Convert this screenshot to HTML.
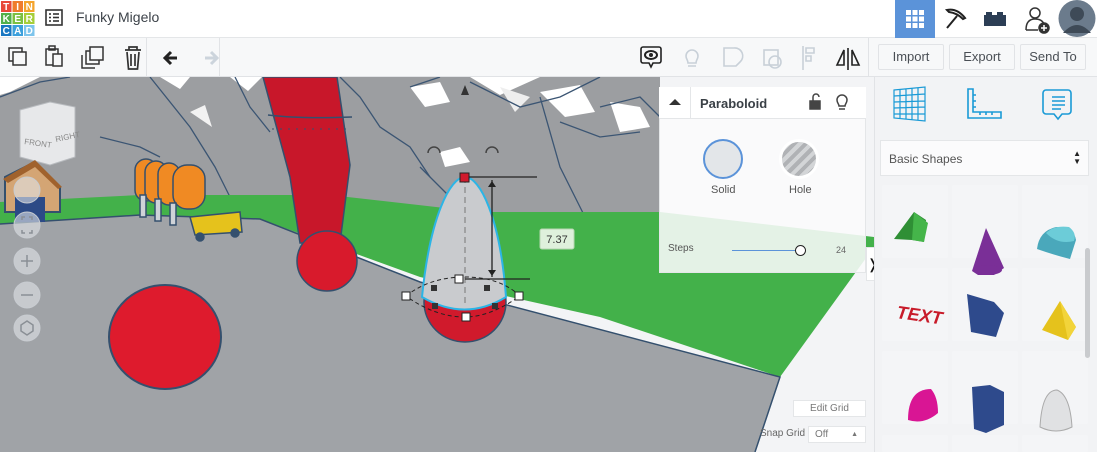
<!DOCTYPE html>
<html style="width:1097px;height:452px;overflow:hidden"><head><meta charset="utf-8"><style>
*{margin:0;padding:0;box-sizing:border-box}
body{width:1097px;height:452px;overflow:hidden;font-family:"Liberation Sans",sans-serif;background:#fff;position:relative}
.abs{position:absolute}
.btn{position:absolute;top:44px;height:26px;border:1px solid #e1e3e6;background:#f7f8f9;border-radius:2px;font-size:13px;color:#4a4f55;text-align:center;line-height:24px}
.tile{position:absolute;width:66px;height:73px;background:#f4f5f7;border-radius:2px}
</style></head><body>
<div class="abs" style="left:0;top:0;width:1097px;height:38px;background:#fff;border-bottom:1px solid #e4e6e8"></div>
<svg class="abs" style="left:0px;top:0px" width="36" height="37">
<g font-family="Liberation Sans" font-weight="bold" font-size="10" fill="#fff" text-anchor="middle">
<rect x="1" y="1" width="10.5" height="11" fill="#e8483a"/><text x="6.2" y="10">T</text>
<rect x="12.5" y="1" width="10.5" height="11" fill="#ef7c2c"/><text x="17.7" y="10">I</text>
<rect x="24" y="1" width="10.5" height="11" fill="#f4a42c"/><text x="29.2" y="10">N</text>
<rect x="1" y="13" width="10.5" height="11" fill="#52b04b"/><text x="6.2" y="22">K</text>
<rect x="12.5" y="13" width="10.5" height="11" fill="#7cc042"/><text x="17.7" y="22">E</text>
<rect x="24" y="13" width="10.5" height="11" fill="#a6ce39"/><text x="29.2" y="22">R</text>
<rect x="1" y="25" width="10.5" height="11" fill="#1a78c2"/><text x="6.2" y="34">C</text>
<rect x="12.5" y="25" width="10.5" height="11" fill="#3ca0dc"/><text x="17.7" y="34">A</text>
<rect x="24" y="25" width="10.5" height="11" fill="#7dc4ec"/><text x="29.2" y="34">D</text></g></svg>
<svg class="abs" style="left:45px;top:9px" width="18" height="17"><rect x="1" y="1" width="16" height="15" fill="none" stroke="#333" stroke-width="1.6"/><g stroke="#333" stroke-width="1.6"><line x1="4" y1="5" x2="6" y2="5"/><line x1="8" y1="5" x2="14" y2="5"/><line x1="4" y1="8.5" x2="6" y2="8.5"/><line x1="8" y1="8.5" x2="14" y2="8.5"/><line x1="4" y1="12" x2="6" y2="12"/><line x1="8" y1="12" x2="14" y2="12"/></g></svg>
<div class="abs" style="left:76px;top:9px;font-size:14px;color:#3c4249">Funky Migelo</div>
<div class="abs" style="left:895px;top:0;width:40px;height:38px;background:#5b93d9"></div>
<svg class="abs" style="left:905px;top:9px" width="20" height="20" fill="#fff"><rect x="1" y="1" width="5" height="5"/><rect x="7.5" y="1" width="5" height="5"/><rect x="14" y="1" width="5" height="5"/><rect x="1" y="7.5" width="5" height="5"/><rect x="7.5" y="7.5" width="5" height="5"/><rect x="14" y="7.5" width="5" height="5"/><rect x="1" y="14" width="5" height="5"/><rect x="7.5" y="14" width="5" height="5"/><rect x="14" y="14" width="5" height="5"/></svg>
<svg class="abs" style="left:943px;top:6px" width="26" height="26" fill="none" stroke="#222" stroke-width="2"><path d="M4 4 Q14 2 22 12 L20 13 Q14 7 6 6 Z"/><line x1="14" y1="10" x2="4" y2="22"/></svg>
<svg class="abs" style="left:983px;top:11px" width="24" height="16" fill="#2c3e55"><rect x="1" y="4" width="22" height="11"/><rect x="3" y="1" width="6" height="4"/><rect x="14" y="1" width="6" height="4"/></svg>
<svg class="abs" style="left:1024px;top:6px" width="26" height="28" fill="none" stroke="#333" stroke-width="1.5"><circle cx="11" cy="7" r="5"/><path d="M2 24 Q2 13 11 13 Q18 13 20 18"/><line x1="2" y1="24" x2="14" y2="24"/><circle cx="20" cy="22" r="5" fill="#333"/><path d="M20 19v6M17 22h6" stroke="#fff"/></svg>
<svg class="abs" style="left:1057px;top:0px" width="40" height="37"><circle cx="20" cy="18.5" r="18.5" fill="#6b7b8c"/><circle cx="20" cy="14" r="7" fill="#3e4a57"/><path d="M6 33 Q20 17 34 33" fill="#3e4a57"/></svg>

<div class="abs" style="left:0;top:38px;width:1097px;height:39px;background:#f7f8f9;border-bottom:1px solid #e1e3e6"></div>
<div class="abs" style="left:146px;top:38px;width:1px;height:39px;background:#e1e3e6"></div>
<div class="abs" style="left:219px;top:38px;width:1px;height:39px;background:#e1e3e6"></div>
<div class="abs" style="left:868px;top:38px;width:1px;height:39px;background:#e1e3e6"></div>
<svg class="abs" style="left:0px;top:38px" width="240" height="39" fill="none" stroke="#333" stroke-width="1.5">
<rect x="9" y="10" width="13" height="13"/><rect x="13" y="14" width="13" height="13" fill="#f7f8f9"/>
<rect x="46" y="11" width="12" height="16"/><rect x="49" y="8" width="6" height="4"/><rect x="53" y="16" width="9" height="12" fill="#f7f8f9"/>
<rect x="86" y="13" width="13" height="13"/><rect x="90" y="9" width="13" height="13" fill="#f7f8f9"/><path d="M82 17v13h13"/>
<path d="M125 12h16M129 12v-3h8v3M127 14l1.5 17h9l1.5-17M131 16v12M135 16v12" stroke-width="1.7"/>
<path d="M165 20h12 M171 14l-6 6 6 6" stroke="#222" stroke-width="3"/>
<path d="M217 20h-12 M211 14l6 6-6 6" stroke="#ccd4dc" stroke-width="3"/>
</svg>
<svg class="abs" style="left:630px;top:38px" width="240" height="39" fill="none" stroke-width="1.6">
<path d="M13 9h16a2 2 0 0 1 2 2v12a2 2 0 0 1-2 2h-6l-2 4-2-4h-6a2 2 0 0 1-2-2v-12a2 2 0 0 1 2-2z" stroke="#222"/><ellipse cx="21" cy="17" rx="6" ry="4" stroke="#222" stroke-width="2"/><circle cx="21" cy="17" r="2" fill="#222"/>
<g stroke="#c8d0d8"><path d="M56 18a6 6 0 1 1 12 0c0 3-2 4-2 7h-8c0-3-2-4-2-7zM58 28h8"/><path d="M94 10h10a8 8 0 0 1 6 14l-4 4h-12z"/><rect x="134" y="12" width="14" height="15"/><circle cx="145" cy="24" r="6"/><path d="M173 8v24M176 10h8v5h-8zM176 18h5v5h-5z"/></g>
<path d="M218 10v22M214 12l-7 15h7zM222 12l7 15h-7z" stroke="#222"/>
</svg>
<div class="btn" style="left:878px;width:66px">Import</div>
<div class="btn" style="left:949px;width:66px">Export</div>
<div class="btn" style="left:1020px;width:66px">Send To</div>

<svg class="abs" style="left:0px;top:77px" width="874" height="375">
<rect width="874" height="375" fill="#f3f4f6"/>
<rect width="660" height="170" fill="#9c9ea1"/>
<polygon points="0,0 40,0 10,15 0,18" fill="#fff"/>
<polygon points="160,0 190,0 180,12" fill="#fff"/>
<polygon points="230,0 262,0 248,14" fill="#fff"/>
<polygon points="410,10 440,5 450,25 425,30" fill="#fff"/>
<polygon points="470,0 540,0 500,18" fill="#fff"/>
<polygon points="190,35 205,28 212,50" fill="#f2f2f2"/>
<polygon points="540,15 580,8 595,35 565,40" fill="#fff"/>
<polygon points="610,25 640,30 650,50 620,55" fill="#fff"/>
<polygon points="440,75 460,70 470,85 445,90" fill="#fff"/>
<polygon points="500,10 530,20 515,35" fill="#eee"/>
<g fill="none" stroke="#3b5573" stroke-width="1.3">
<path d="M0 20 L40 5 L70 0"/><path d="M150 0 L190 50 L215 90 L230 120"/><path d="M235 0 L250 30 L270 55"/><path d="M340 0 L360 20 L380 50 L410 70 L430 100"/><path d="M410 10 L440 0"/><path d="M470 5 L520 30 L560 20 L600 0"/><path d="M540 20 L560 90 L580 130 L590 150"/><path d="M600 30 L640 20 L660 40"/><path d="M560 45 L600 60 L640 55"/><path d="M420 90 L450 120 L470 140"/><path d="M100 60 L140 70 L160 80"/>
</g>
<polygon points="0,125 140,118 330,118 480,135 660,135 874,160 874,170 780,300 600,240 420,200 260,142 140,138 0,147" fill="#43b14a"/>
<polygon points="0,147 140,138 260,142 420,205 780,300 755,375 0,375" fill="#a0a3a7"/>
<path d="M0 147 L140 138 L260 142 L420 205 L780 300 L755 375" fill="none" stroke="#34506e" stroke-width="1.5"/>
<polygon points="20,33 50,25 75,30 75,80 50,88 20,80" fill="#e7e8ea" stroke="#b8bbbf"/>
<text x="24" y="67" font-size="8" fill="#888" transform="rotate(8 24 67)">FRONT</text><text x="56" y="65" font-size="8" fill="#888" transform="rotate(-12 56 65)">RIGHT</text>
<polygon points="5,100 35,85 60,110 60,135 5,135" fill="#d4a574" stroke="#34506e" stroke-width="2"/>
<polygon points="3,102 35,83 62,110 58,112 35,90 8,106" fill="#a0622d"/>
<rect x="15" y="120" width="30" height="25" fill="#2c4a86"/>
<g stroke="#34506e" stroke-width="1.5"><rect x="135" y="82" width="22" height="42" rx="11" fill="#f08a23"/><rect x="145" y="84" width="22" height="42" rx="11" fill="#f08a23"/><rect x="158" y="86" width="22" height="42" rx="11" fill="#f08a23"/><rect x="173" y="88" width="32" height="44" rx="14" fill="#f08a23"/>
<rect x="140" y="118" width="6" height="22" fill="#cfd3d8"/><rect x="155" y="122" width="6" height="22" fill="#cfd3d8"/><rect x="170" y="126" width="6" height="22" fill="#cfd3d8"/>
<polygon points="190,140 240,135 242,155 195,158" fill="#e5c21c"/><circle cx="200" cy="160" r="4" fill="#34506e"/><circle cx="235" cy="156" r="4" fill="#34506e"/></g>
<g fill="rgba(225,228,232,0.6)" stroke="#c8ccd1"><circle cx="27" cy="113" r="13"/><circle cx="27" cy="148" r="13"/><circle cx="27" cy="184" r="13"/><circle cx="27" cy="218" r="13"/><circle cx="27" cy="251" r="13"/></g>
<g stroke="#8a8f95" stroke-width="1.5" fill="none"><path d="M21 184h12M27 178v12M21 218h12"/><path d="M22 143v-3h3M29 140h3v3M32 153v3h-3M25 156h-3v-3"/><path d="M27 244l6 4v6l-6 4-6-4v-6z"/></g>
<polygon points="263,0 337,0 350,88 340,166 300,166 290,100" fill="#c8172a" stroke="#34506e" stroke-width="1.5"/>
<path d="M268 38 Q300 42 352 40" fill="none" stroke="#34506e" stroke-width="1.5"/>
<path d="M272 52 L350 52" stroke="#34506e" stroke-dasharray="2 6"/>
<circle cx="327" cy="184" r="30" fill="#d81a2c" stroke="#34506e" stroke-width="1.5"/>
<ellipse cx="165" cy="260" rx="56" ry="52" fill="#de1b2d" stroke="#34506e" stroke-width="2"/>
<ellipse cx="465" cy="225" rx="41" ry="40" fill="#d01a2c" stroke="#34506e" stroke-width="1.5"/>
<path d="M422 220 C430 140 450 100 465 100 C480 100 500 140 506 220 Q465 245 422 220Z" fill="#c9cbce" stroke="#2bb5e6" stroke-width="2"/>
<path d="M465 100 V230" stroke="#777" stroke-dasharray="6 4"/>
<path d="M465 100 H537 M492 103 V200 M465 202 H530" stroke="#222" stroke-width="1.3"/>
<path d="M488 110 l4-6 4 6z M488 193 l4 6 4-6z" fill="#222"/>
<path d="M406 219 Q430 200 465 200 Q500 200 520 219 Q490 240 465 240 Q435 240 406 219" fill="none" stroke="#222" stroke-dasharray="4 3"/>
<rect x="460" y="96" width="9" height="9" fill="#d01a2c" stroke="#222"/>
<g fill="#fff" stroke="#222"><rect x="402" y="215" width="8" height="8"/><rect x="515" y="215" width="8" height="8"/><rect x="455" y="198" width="8" height="8"/><rect x="462" y="236" width="8" height="8"/></g>
<g fill="#333"><rect x="431" y="208" width="6" height="6"/><rect x="484" y="208" width="6" height="6"/><rect x="432" y="226" width="6" height="6"/><rect x="492" y="226" width="6" height="6"/></g>
<path d="M461 18 l4-10 4 10z" fill="#333"/>
<path d="M428 76 a6 6 0 0 1 12 0 M486 76 a6 6 0 0 1 12 0" fill="none" stroke="#444" stroke-width="1.5"/>
<rect x="540" y="152" width="34" height="20" rx="2" fill="#dff0dc" stroke="#b7d6b2"/>
<text x="557" y="166" font-size="11" fill="#333" text-anchor="middle">7.37</text>
</svg>

<div class="abs" style="left:659px;top:87px;width:207px;height:186px;background:rgba(250,251,252,0.88);border:1px solid #e4e6e8"></div>
<div class="abs" style="left:659px;top:87px;width:207px;height:32px;background:#fff;border-bottom:1px solid #e4e6e8"></div>
<div class="abs" style="left:690px;top:87px;width:1px;height:32px;background:#e4e6e8"></div>
<svg class="abs" style="left:668px;top:97px" width="14" height="10"><path d="M1 8 L7 2 L13 8z" fill="#333"/></svg>
<div class="abs" style="left:700px;top:96px;font-size:13px;font-weight:bold;color:#3a4046">Paraboloid</div>
<svg class="abs" style="left:808px;top:92px" width="44" height="20" fill="none" stroke="#444" stroke-width="1.5"><rect x="2" y="9" width="10" height="8" fill="#444"/><path d="M5 9 V5 a3 3 0 0 1 6 0"/><path d="M29 8 a5 5 0 1 1 10 0c0 3-2 4-2 6h-6c0-2-2-3-2-6zM31 17h6"/></svg>
<div class="abs" style="left:703px;top:139px;width:40px;height:40px;border-radius:50%;background:#e3e6e9;border:2px solid #5b93d9"></div>
<div class="abs" style="left:779px;top:139px;width:40px;height:40px;border-radius:50%;background:repeating-linear-gradient(135deg,#b0b2b5 0 4px,#d3d5d7 4px 8px);border:3px solid #fff"></div>
<div class="abs" style="left:711px;top:184px;font-size:11px;color:#555">Solid</div>
<div class="abs" style="left:789px;top:184px;font-size:11px;color:#555">Hole</div>
<div class="abs" style="left:668px;top:243px;font-size:10px;color:#555">Steps</div>
<div class="abs" style="left:732px;top:250px;width:66px;height:1px;background:#5b93d9"></div>
<div class="abs" style="left:795px;top:245px;width:11px;height:11px;border-radius:50%;background:#fff;border:1.5px solid #222"></div>
<div class="abs" style="left:836px;top:245px;font-size:9px;color:#666">24</div>
<div class="abs" style="left:866px;top:247px;width:9px;height:34px;background:#fff;border:1px solid #e4e6e8;font-size:14px;line-height:32px;color:#111;text-align:center;overflow:hidden">&#x276D;</div>
<div class="abs" style="left:793px;top:400px;width:73px;height:17px;background:#fff;border:1px solid #e4e6e8;font-size:10px;color:#777;text-align:center;line-height:15px">Edit Grid</div>
<div class="abs" style="left:760px;top:428px;font-size:10px;color:#666">Snap Grid</div>
<div class="abs" style="left:808px;top:426px;width:58px;height:17px;background:#fff;border:1px solid #e4e6e8;font-size:10px;color:#777;padding-left:6px;line-height:15px">Off<span style="position:absolute;right:7px;font-size:7px">&#9650;</span></div>

<div class="abs" style="left:874px;top:77px;width:223px;height:375px;background:#f2f3f5;border-left:1px solid #e1e3e6;overflow:hidden">
<div class="tile" style="left:7px;top:108px"></div><div class="tile" style="left:77px;top:108px"></div><div class="tile" style="left:147px;top:108px"></div>
<div class="tile" style="left:7px;top:191px"></div><div class="tile" style="left:77px;top:191px"></div><div class="tile" style="left:147px;top:191px"></div>
<div class="tile" style="left:7px;top:274px"></div><div class="tile" style="left:77px;top:274px"></div><div class="tile" style="left:147px;top:274px"></div>
<div class="tile" style="left:7px;top:358px;height:17px"></div><div class="tile" style="left:77px;top:358px;height:17px"></div><div class="tile" style="left:147px;top:358px;height:17px"></div>
</div>
<svg class="abs" style="left:890px;top:86px" width="200" height="40" fill="none" stroke="#1a9ad6" stroke-width="1.6">
<path d="M4 4 L35 1 L35 35 L4 32Z M4 10 L35 8 M4 16 L35 15 M4 22 L35 21 M4 28 L35 28 M10 3 V33 M16 3 V33 M22 2 V34 M28 2 V34" stroke-width="1.2"/>
<path d="M78 3 h5 V26 h28 v6 H78Z M83 9h3M83 15h3M83 21h3M90 26v3M96 26v3M102 26v3"/>
<path d="M156 4 h22 a3 3 0 0 1 3 3 v18 a3 3 0 0 1-3 3 h-6 l-4 5-4-5 h-8 a3 3 0 0 1-3-3 v-18 a3 3 0 0 1 3-3z M162 11h13M162 15h13M162 19h13M162 23h9"/>
</svg>
<div class="abs" style="left:880px;top:140px;width:209px;height:36px;background:#fbfbfc;border:1px solid #e4e6e8;font-size:12px;color:#555;padding:11px 0 0 8px">Basic Shapes<span style="position:absolute;right:7px;top:9px;font-size:8px;line-height:8px;color:#222">&#9650;<br>&#9660;</span></div>
<div class="abs" style="left:1085px;top:248px;width:5px;height:110px;background:#c9cbce;border-radius:3px"></div>
<svg class="abs" style="left:874px;top:185px" width="223" height="267">
<polygon points="20,54 40,27 52,35 50,57 38,55" fill="#2f8f35"/><polygon points="40,27 54,38 50,57 38,55" fill="#45b54a"/>
<polygon points="112,43 98,86 104,90 120,90 130,83" fill="#7a2f97"/><ellipse cx="114" cy="85" rx="14" ry="5" fill="#7a2f97"/>
<path d="M163 64 Q165 46 182 42 Q200 42 202 55 L196 74 Q180 70 163 64Z" fill="#4aa8bb"/><path d="M172 48 Q180 40 195 42 Q203 48 200 56 Q184 60 172 48Z" fill="#6cccd8"/>
<text x="22" y="133" font-size="18" font-weight="bold" fill="#c81b2a" font-style="italic" transform="rotate(8 22 133)">TEXT</text>
<polygon points="93,109 120,117 130,128 122,152 97,147" fill="#2e4a8c"/>
<polygon points="168,145 186,116 202,142 194,155" fill="#e5c21c"/><polygon points="186,116 202,142 194,155" fill="#f2d43a"/>
<path d="M34 235 Q34 204 57 204 Q64 212 64 228 Q50 240 34 235Z" fill="#d91594"/>
<polygon points="98,202 116,200 130,207 130,240 112,248 100,244" fill="#2e4a8c"/>
<path d="M166 242 Q168 205 183 205 Q196 210 198 242 Q182 250 166 242Z" fill="#e0e1e3" stroke="#aaa"/>
</svg>
</body></html>
